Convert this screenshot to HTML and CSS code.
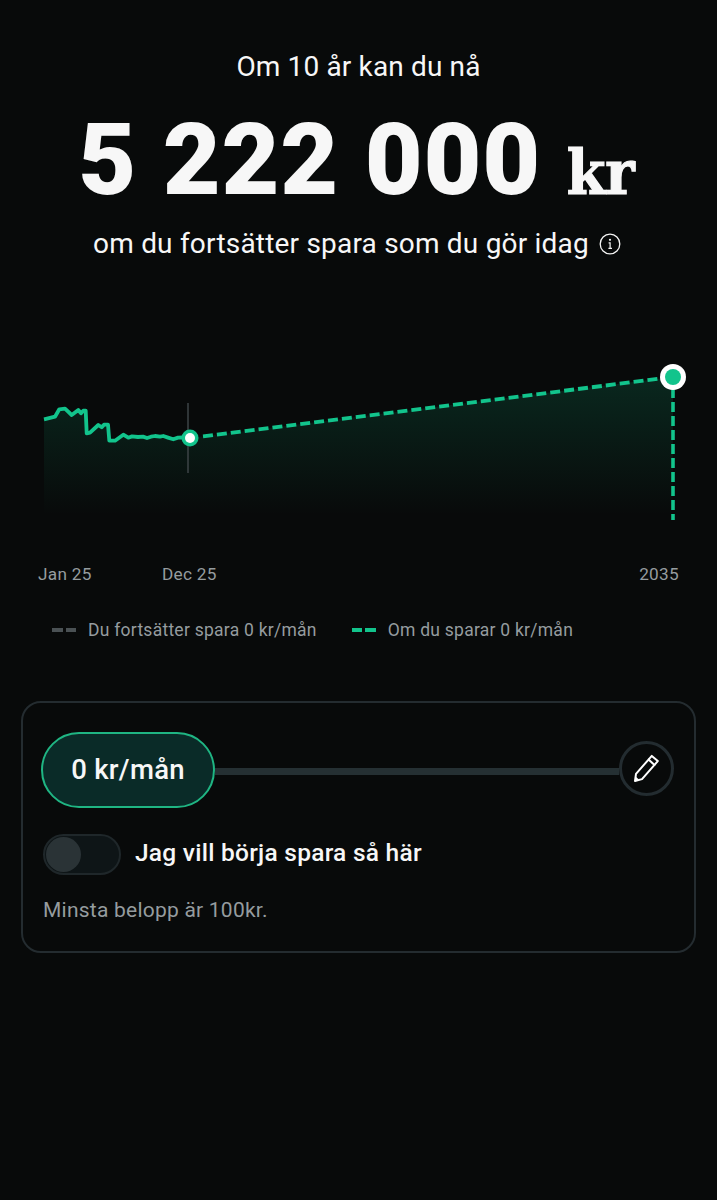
FILE: index.html
```html
<!DOCTYPE html>
<html lang="sv">
<head>
<meta charset="utf-8">
<title>Sparande</title>
<link rel="stylesheet" href="styles.css">
</head>
<body>
<main class="page">
  <header class="hero">
    <p class="lead">Om 10 år kan du nå</p>
    <h1 class="amount"><span>5 222 000</span> <span class="unit">kr</span></h1>
    <p class="sub">om du fortsätter spara som du gör idag
      <svg class="info" viewBox="0 0 22 22" width="22" height="22" aria-hidden="true">
        <circle cx="11" cy="11" r="9.8" fill="none" stroke="#f5f5f5" stroke-width="1.3"/>
        <circle cx="11" cy="6.8" r="1.1" fill="#f5f5f5"/>
        <path d="M9.6 9.9H11.1V15.2M9.4 15.4H13" fill="none" stroke="#f5f5f5" stroke-width="1.2"/>
      </svg>
    </p>
  </header>

  <svg class="chart" viewBox="0 0 717 200" width="717" height="200" aria-hidden="true">
    <defs>
      <linearGradient id="fade" gradientUnits="userSpaceOnUse" x1="0" y1="27" x2="0" y2="165">
        <stop offset="0" stop-color="#10b981" stop-opacity=".17"/>
        <stop offset="1" stop-color="#10b981" stop-opacity="0"/>
      </linearGradient>
    </defs>
    <path fill="url(#fade)" d="M44 69.3L55 66.7L59.3 59.3L65 58.7L71.7 65L78.3 60L81 63.3L83.3 60.7L85.7 60.7L86.7 83.3L90 82.7L98.3 75L101.7 77.3L104 74.7L108 74.7L109.3 90.7L115 90.7L123.3 84.7L128.3 87.7L135 86.3L146.7 87.7L155 86L163.3 86L173.3 89.3L190 88L673 27V165H44Z"/>
    <path d="M188 53V123" stroke="#3c4447" stroke-width="1.5"/>
    <path fill="none" stroke="#12c48c" stroke-width="3.8" stroke-linejoin="round" d="M44 69.3L55 66.7L59.3 59.3L65 58.7L71.7 65L78.3 60L81 63.3L83.3 60.7L85.7 60.7L86.7 83.3L90 82.7L98.3 75L101.7 77.3L104 74.7L108 74.7L109.3 90.7L115 90.7L123.3 84.7L128.3 87.7L132 86.4L138 87L143 86.6L147 88L151 86.7L155 86L160 86.6L163.3 86L168 87.6L173.3 89.3L178 87.6L183.3 87.3L190 88"/>
    <path fill="none" stroke="#12c48c" stroke-width="3.8" stroke-dasharray="10 4" d="M203 86.4L673 27"/>
    <path fill="none" stroke="#12c48c" stroke-width="3.6" stroke-dasharray="10 4" d="M673 38V170"/>
    <circle cx="190" cy="88" r="8.5" fill="#12c48c"/>
    <circle cx="190" cy="88" r="5" fill="#fff"/>
    <circle cx="673" cy="27" r="13" fill="#fff"/>
    <circle cx="673" cy="27" r="8" fill="#12c48c"/>
  </svg>

  <div class="axis">
    <span class="tick tick-first">Jan 25</span>
    <span class="tick tick-second">Dec 25</span>
    <span class="tick tick-last">2035</span>
  </div>

  <div class="legend">
    <span class="legend-item"><i class="dash dash-grey"></i>Du fortsätter spara 0 kr/mån</span>
    <span class="legend-item"><i class="dash dash-green"></i>Om du sparar 0 kr/mån</span>
  </div>

  <section class="card">
    <div class="slider">
      <div class="pill">0 kr/mån</div>
      <div class="track"></div>
      <button class="edit" type="button" aria-label="Redigera">
        <svg viewBox="0 0 25 29" width="25" height="29" aria-hidden="true">
          <path d="M1 27L2 19.9L14.5 5.6L20.5 10.9L8 25.1Z" fill="none" stroke="#fff" stroke-width="2" stroke-linejoin="round"/>
          <path d="M14.5 5.6L17.8 1.9L23.8 7.1L20.5 10.9" fill="none" stroke="#fff" stroke-width="2" stroke-linejoin="round"/>
          <path d="M1 27L1.6 22.6L4.9 25.6Z" fill="#fff"/>
        </svg>
      </button>
    </div>
    <div class="switch-row">
      <span class="switch"><span class="knob"></span></span>
      <span class="switch-label">Jag vill börja spara så här</span>
    </div>
    <p class="hint">Minsta belopp är 100kr.</p>
  </section>
</main>
</body>
</html>
```
FILE: styles.css
```css
* { box-sizing: border-box; }
html, body { margin: 0; padding: 0; }
body {
  background: #080a0a;
  color: #f7f7f7;
  font-family: Roboto, "Liberation Sans", sans-serif;
  width: 717px;
  height: 1200px;
  overflow: hidden;
}
.page { display: flex; flex-direction: column; }
.hero { display: flex; flex-direction: column; align-items: center; padding-top: 50px; }
.lead { margin: 0; font-size: 28px; line-height: 34px; letter-spacing: .15px; }
.amount {
  margin: 21px 4px 0 0;
  font-size: 100px;
  line-height: 110px;
  font-weight: 900;
  letter-spacing: .8px;
  white-space: pre;
}
.unit {
  font-family: "DejaVu Serif Condensed", "DejaVu Serif", serif;
  font-stretch: condensed;
  font-size: 62px;
  font-weight: 700;
  letter-spacing: 0;
  -webkit-text-stroke: 1.2px #f7f7f7;
}
.sub {
  margin: -1px 3px 0 0;
  font-size: 28px;
  line-height: 34px;
  letter-spacing: .2px;
  display: flex;
  align-items: center;
  gap: 10px;
}
.info { display: block; }
.chart { display: block; margin-top: 89px; }
.axis { position: relative; height: 24px; margin-top: 12px; }
.tick { position: absolute; top: 0; font-size: 17.2px; line-height: 24px; color: #959c9f; letter-spacing: .3px; }
.tick-first { left: 38px; }
.tick-second { left: 162px; }
.tick-last { right: 38px; }
.legend { display: flex; gap: 35px; padding-left: 52px; margin-top: 32px; }
.legend-item { display: flex; align-items: center; font-size: 17.5px; line-height: 24px; color: #959c9f; letter-spacing: .25px; }
.dash { display: block; width: 24px; height: 3.5px; margin-right: 12px; }
.dash-grey { background: repeating-linear-gradient(90deg, #4a5154 0 10.5px, transparent 10.5px 13.5px); }
.dash-green { background: repeating-linear-gradient(90deg, #12c48c 0 10.5px, transparent 10.5px 13.5px); }
.card {
  margin: 59px 21px 0;
  height: 252px;
  border: 2px solid #242c30;
  border-radius: 20px;
  padding: 29px 20px 0 18px;
}
.slider { display: flex; align-items: center; }
.pill {
  width: 174px;
  height: 76px;
  border-radius: 38px;
  background: #0a2b28;
  border: 2px solid #1fb583;
  display: flex;
  align-items: center;
  justify-content: center;
  padding-bottom: 2px;
  font-size: 27.5px;
  font-weight: 500;
  letter-spacing: .3px;
  flex: none;
}
.track { flex: 1; height: 7px; margin-top: 3px; background: #253033; }
.edit {
  flex: none;
  width: 55px;
  height: 55px;
  margin-bottom: 4px;
  border-radius: 50%;
  border: 3px solid #232c30;
  background: #080a0a;
  padding: 0;
  display: flex;
  align-items: center;
  justify-content: center;
}
.switch-row { display: flex; align-items: center; margin-top: 26px; padding-left: 2px; }
.switch {
  width: 78px;
  height: 41px;
  border-radius: 21px;
  background: #0e1517;
  border: 2px solid #1f272a;
  display: flex;
  align-items: center;
  padding-left: 1px;
  flex: none;
}
.knob { width: 35px; height: 35px; border-radius: 50%; background: #2a3336; }
.switch-label { margin: 0 0 3px 14px; font-size: 24.5px; font-weight: 500; line-height: 32px; letter-spacing: .25px; }
.hint { margin: 21px 0 0 2px; font-size: 21px; line-height: 28px; color: #959c9f; letter-spacing: .23px; }
```
